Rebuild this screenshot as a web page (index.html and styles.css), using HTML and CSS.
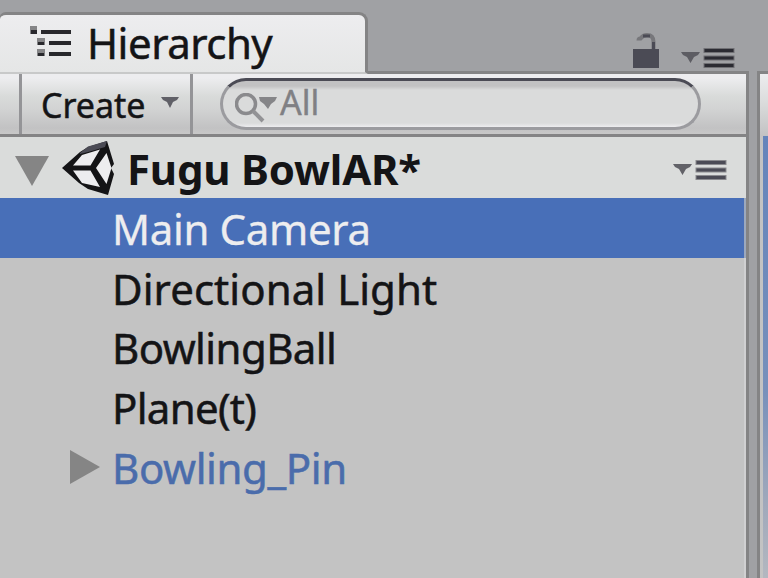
FILE: index.html
```html
<!DOCTYPE html>
<html lang="en">
<head>
<meta charset="utf-8">
<title>Hierarchy</title>
<link rel="stylesheet" href="styles.css">
</head>
<body>
<div class="window">
  <main class="pane">
    <header class="tabs">
      <div class="tab">
        <svg class="tree-icon" width="42" height="32" viewBox="0 0 42 32">
          <g fill="#858587"><path d="M0 0h7v8H0zM7 12h8v7H7zM7 23h8v7H7z"/></g>
          <g fill="#28282c"><path d="M1 4h6v4H1zM8 16h6v3H8zM8 27h6v3H8zM11 4h30v4H11zM19 15h22v4H19zM19 26h22v4H19z"/></g>
        </svg>
        <span class="tab-title">Hierarchy</span>
      </div>
      <div class="tab-tools">
        <svg class="lock" width="28" height="36" viewBox="0 0 28 36">
          <path d="M5.500 7.500Q5.500 5.500 7.500 5.500Q10 2 14 2Q20.500 2 20.500 9V18" fill="none" stroke="#77777b" stroke-width="4"/>
          <path d="M10 3h7M20.500 9v9" fill="none" stroke="#4b4b55" stroke-width="3"/>
          <path d="M0 16h26v19H0z" fill="#4b4b55"/>
        </svg>
        <svg class="menu" width="54" height="22" viewBox="0 0 54 22"><path d="M0 4h19l-2 3-4 2-3.500 6-3.500-6-4-2z" fill="#5d5d63"/><path d="M22.500 0h31v5h-31zM22.500 7.500h31v5h-31zM22.500 15h31v5h-31z" fill="#707074"/><path d="M23.500 1h29v3h-29zM23.500 8.500h29v3h-29zM23.500 16h29v3h-29z" fill="#2b2b32"/></svg>
      </div>
    </header>
    <div class="toolbar">
      <div class="create"><span class="create-text">Create</span>
        <svg class="create-arrow" width="18" height="12" viewBox="0 0 18 12"><path d="M0 0h18l-2 3-4 2-3 6-3-6-4-2z" fill="#606067"/></svg>
      </div>
      <label class="search">
        <svg width="42" height="32" viewBox="0 0 42 32"><circle cx="11" cy="11" r="9.500" fill="none" stroke="#8a8a8d" stroke-width="3.500"/><path d="M18 18l10 10" stroke="#929295" stroke-width="4"/><path d="M24 4h18l-2 4-4 3-3 5-4-5-4-3z" fill="#858588"/></svg>
        <span class="search-text">All</span>
      </label>
    </div>
    <div class="scene">
      <svg class="fold" width="34" height="31" viewBox="0 0 34 31"><path d="M0 0h34L17 30z" fill="#858585"/></svg>
      <svg class="unity" width="52" height="55" viewBox="0 0 52 55">
        <path d="M0 27L18 11 26 6 45 0 52 23 49 27 52 33 46 54 26 48 17 42z" fill="#141416"/>
        <path d="M18 12L26 5.500 45 0 43 6 26 11 18 13z" fill="#4b4b55"/>
        <path d="M11 24.500L20 14 38 8.500 28.500 24.500zM11 29.500H28.500L38 46 20 42zM44.500 12L49.500 27 44.500 43 34 27z" fill="#ededef"/>
      </svg>
      <span class="scene-title">Fugu BowlAR*</span>
      <svg class="menu" width="54" height="22" viewBox="0 0 54 22"><path d="M0 4h19l-2 3-4 2-3.500 6-3.500-6-4-2z" fill="#626268"/><path d="M22.500 0h31v5h-31zM22.500 7.500h31v5h-31zM22.500 15h31v5h-31z" fill="#8a8a8e"/><path d="M23.500 1h29v3h-29zM23.500 8.500h29v3h-29zM23.500 16h29v3h-29z" fill="#4b4b55"/></svg>
    </div>
    <ul class="objects">
      <li class="object selected"><span class="name camera">Main Camera</span></li>
      <li class="object"><span class="name light">Directional Light</span></li>
      <li class="object"><span class="name ball">BowlingBall</span></li>
      <li class="object"><span class="name plane">Plane(t)</span></li>
      <li class="object prefab"><svg class="expand" width="30" height="34" viewBox="0 0 30 34"><path d="M0 0l30 17L0 34z" fill="#858585"/></svg><span class="name pin">Bowling_Pin</span></li>
    </ul>
  </main>
  <aside class="neighbor"><div class="neighbor-bar"></div><div class="neighbor-view"></div></aside>
</div>
</body>
</html>
```
FILE: styles.css
```css
* { box-sizing: border-box; }
body { margin: 0; background: #a0a1a4; color: #141416; font-family: "Noto Sans", "Open Sans", sans-serif; }
svg { display: block; flex: none; }
.window { display: flex; width: 768px; height: 578px; overflow: hidden; }
.pane { width: 749px; flex: none; }
.tabs { display: flex; justify-content: space-between; height: 71px; padding-top: 12px; }
.tab { display: flex; width: 369px; height: 62px; margin-left: -1px; padding-left: 30px; border: 3px solid #848485; border-left-width: 1px; border-bottom: 2px solid #c8c9c9; border-radius: 7px 9px 0 0; background: linear-gradient(#ededef, #e5e6e6); z-index: 1; }
.tree-icon { margin-top: 11px; }
.tab-title { margin-left: 15px; font-size: 42px; line-height: 56px; letter-spacing: -.5px; white-space: nowrap; -webkit-text-stroke: .5px; }
.tab-tools { display: flex; flex: none; padding-right: 14px; }
.lock { margin-top: 21px; }
.tab-tools .menu { margin: 36px 0 0 20px; }
.toolbar { display: flex; height: 66px; border: solid #848485; border-width: 3px 3px 3px 0; background: linear-gradient(#ededef 0 4px, #d9dbda 22px, #d2d3d3 35px, #c2c2c3 54px, #c8c8c8); }
.create { display: flex; width: 174px; margin-left: 19px; padding-left: 19px; border: solid #949497; border-width: 0 3px; }
.create-text { width: 120px; font-size: 34px; line-height: 63px; -webkit-text-stroke: .5px; }
.create-arrow { margin-top: 23px; }
.search { display: flex; width: 481px; height: 52px; margin: 4px 0 0 27px; padding: 12px 0 0 12px; border: 3px solid #9b9b9f; border-top-color: #4b4b55; border-radius: 26px; background: linear-gradient(#c2c2c3 0 5px, #dadbdb 9px 42px, #ededef); }
.search-text { margin: -14px 0 0 3px; color: #808084; font-size: 34px; line-height: 46px; -webkit-text-stroke: .4px; }
.scene { display: flex; height: 61px; padding-left: 15px; border-right: 3px solid #848485; background: #dadcdb; }
.fold { margin-top: 19px; }
.unity { margin: 4px 0 0 13px; }
.scene-title { width: 546px; margin-left: 13px; font-size: 42px; font-weight: 700; line-height: 64px; letter-spacing: -.2px; white-space: nowrap; }
.scene .menu { margin: 23px 0 0; }
.objects { height: 380px; margin: 0; padding: 0; list-style: none; border-right: 3px solid #848485; background: #c3c3c3; box-shadow: inset -2px 0 #d0d0d1; }
.object { display: flex; height: 59.6px; padding-left: 112px; }
.selected { background: #486fb8; color: #ededef; border-right: 2px solid #9ca8bd; }
.name { font-size: 42px; line-height: 62px; white-space: nowrap; -webkit-text-stroke: .5px; }
.selected .name { -webkit-text-stroke: .3px; }
.camera { letter-spacing: -.35px; }
.light { letter-spacing: .05px; }
.ball { letter-spacing: -.6px; }
.plane { letter-spacing: -.7px; }
.pin { letter-spacing: -.4px; line-height: 64px; }
.prefab { padding-left: 70px; color: #4a6cab; }
.expand { margin: 14px 12px 0 0; }
.neighbor { width: 11px; margin: 71px 0 0 8px; border-left: 3px solid #848485; border-top: 3px solid #848485; background: #c3c3c3; }
.neighbor-bar { height: 62px; background: linear-gradient(#ededef, #dadbdb 30px, #c2c2c3); }
.neighbor-view { height: 460px; margin-left: 3px; background: linear-gradient(#6484bb, #7790bb 55%, #a0a9bb 80%, #b8bbc1); }
```
